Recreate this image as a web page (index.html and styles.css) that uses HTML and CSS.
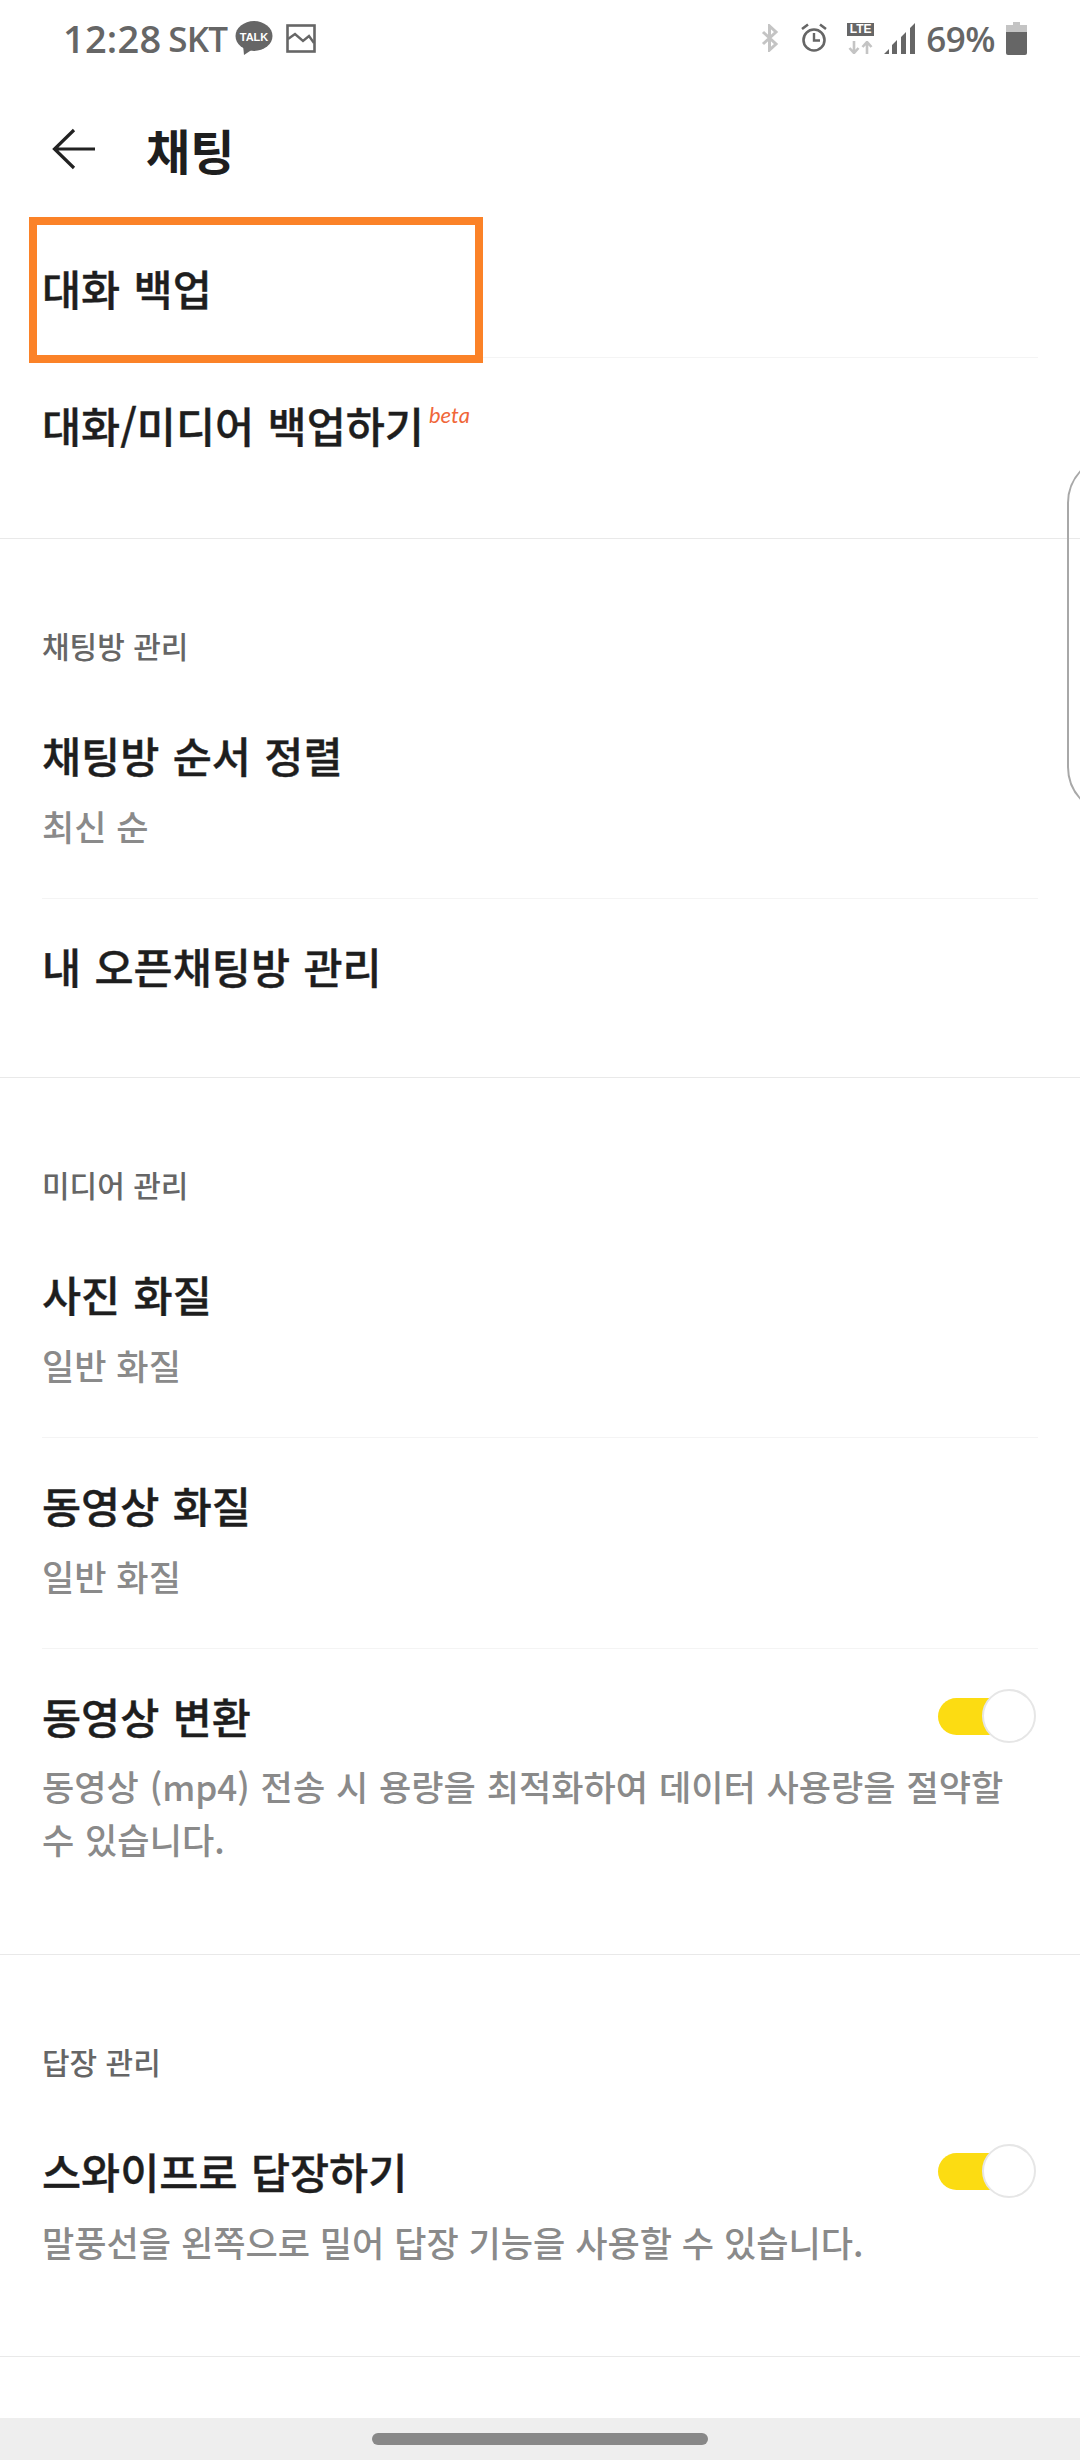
FILE: index.html
```html
<!DOCTYPE html>
<html lang="ko">
<head>
    <meta charset="UTF-8">
    <meta name="viewport" content="width=device-width, initial-scale=1.0">
    <title>채팅</title>
    <link rel="stylesheet" href="styles.css">
</head>
<body>
    <div class="phone">
        <div class="status-bar">
            <div class="status-left">
                <span class="status-time">12:28</span>
                <span class="status-carrier">SKT</span>
                <svg class="ic-talk" width="38" height="35" viewBox="0 0 38 35">
                    <ellipse cx="19" cy="15" rx="18.5" ry="15" fill="#666"/>
                    <path d="M8 24 L9 34 L18 28 Z" fill="#666"/>
                    <text x="19" y="19.5" text-anchor="middle" class="talk-text">TALK</text>
                </svg>
                <svg class="ic-image" width="30" height="29" viewBox="0 0 30 29">
                    <rect x="1.5" y="1.5" width="27" height="26" fill="none" stroke="#666" stroke-width="2.6"/>
                    <path d="M2 15 L9 10 L17 17 L23 12 L28 19" fill="none" stroke="#666" stroke-width="2.4"/>
                </svg>
            </div>
            <div class="status-right">
                <svg width="18" height="28" viewBox="0 0 18 28">
                    <path d="M2 8 L15 20 L8.5 26 V2 L15 8 L2 20" fill="none" stroke="#c4c4c4" stroke-width="3"/>
                </svg>
                <svg class="ic-alarm" width="26" height="30" viewBox="0 0 26 30">
                    <circle cx="13" cy="17" r="10.5" fill="none" stroke="#666" stroke-width="2.6"/>
                    <path d="M13 10 V17.5 H19" fill="none" stroke="#666" stroke-width="2.4"/>
                    <path d="M1 6 L7 1.5 M25 6 L19 1.5" stroke="#666" stroke-width="2.6"/>
                </svg>
                <div class="ic-lte">
                    <span class="lte-box">LTE</span>
                    <svg width="27" height="13" viewBox="0 0 27 13">
                        <path d="M7 0 V11 M2.5 7 L7 12 L11.5 7" fill="none" stroke="#c4c4c4" stroke-width="2.6"/>
                        <path d="M20 13 V2 M15.5 6 L20 1 L24.5 6" fill="none" stroke="#c4c4c4" stroke-width="2.6"/>
                    </svg>
                </div>
                <svg class="ic-signal" width="32" height="31" viewBox="0 0 32 31">
                    <path d="M0 31 L5 26 V31 Z M8 31 V22 L13 17 V31 Z M17 31 V14 L22 9 V31 Z M26 31 V5 L31 0 V31 Z" fill="#666"/>
                </svg>
                <span class="status-battery">69%</span>
                <svg class="ic-battery" width="21" height="33" viewBox="0 0 21 33">
                    <path d="M7 0 H14 V3 H21 V10 H0 V3 H7 Z" fill="#c4c4c4"/>
                    <path d="M0 10 H21 V31 Q21 33 19 33 H2 Q0 33 0 31 Z" fill="#666"/>
                </svg>
            </div>
        </div>

        <header class="app-bar">
            <svg class="back" width="44" height="44" viewBox="0 0 44 44">
                <path d="M43 22 H3 M22 3 L2.5 22 L22 41" fill="none" stroke="#222" stroke-width="3.2"/>
            </svg>
            <h1>채팅</h1>
        </header>

        <section class="section section-top">
            <div class="item item-head">
                <div class="item-title">대화 백업</div>
            </div>
            <div class="item">
                <div class="item-title">대화/미디어 백업하기<sup class="beta">beta</sup></div>
            </div>
        </section>

        <section class="section">
            <div class="section-label">채팅방 관리</div>
            <div class="item">
                <div class="item-title">채팅방 순서 정렬</div>
                <div class="item-sub">최신 순</div>
            </div>
            <div class="item">
                <div class="item-title">내 오픈채팅방 관리</div>
            </div>
        </section>

        <section class="section">
            <div class="section-label">미디어 관리</div>
            <div class="item">
                <div class="item-title">사진 화질</div>
                <div class="item-sub">일반 화질</div>
            </div>
            <div class="item">
                <div class="item-title">동영상 화질</div>
                <div class="item-sub">일반 화질</div>
            </div>
            <div class="item">
                <div class="item-row">
                    <div class="item-title">동영상 변환</div>
                    <div class="toggle"><span class="knob"></span></div>
                </div>
                <div class="item-sub item-desc">동영상 (mp4) 전송 시 용량을 최적화하여 데이터 사용량을 절약할 수 있습니다.</div>
            </div>
        </section>

        <section class="section section-last">
            <div class="section-label">답장 관리</div>
            <div class="item">
                <div class="item-row">
                    <div class="item-title">스와이프로 답장하기</div>
                    <div class="toggle"><span class="knob"></span></div>
                </div>
                <div class="item-sub">말풍선을 왼쪽으로 밀어 답장 기능을 사용할 수 있습니다.</div>
            </div>
        </section>

        <div class="spacer"></div>

        <div class="nav-bar"><span class="nav-pill"></span></div>

        <div class="highlight"></div>
        <div class="edge-handle"></div>
    </div>
</body>
</html>
```

FILE: styles.css
```css
* {
    box-sizing: border-box;
}

html, body {
    margin: 0;
    padding: 0;
}

body {
    font-family: "Noto Sans CJK KR", "Noto Sans", sans-serif;
    background-color: #ffffff;
    color: #1e1e1e;
}

.phone {
    position: relative;
    width: 1080px;
    height: 2460px;
    display: flex;
    flex-direction: column;
    overflow: hidden;
}

/* status bar */
.status-bar {
    height: 76px;
    flex: none;
    display: flex;
    justify-content: space-between;
    align-items: center;
    padding: 0 53px 0 63px;
    color: #666;
    font-family: "Open Sans", sans-serif;
    font-weight: 600;
}

.status-left,
.status-right {
    display: flex;
    align-items: center;
}

.status-time {
    font-size: 38px;
    letter-spacing: 0.2px;
}

.status-carrier {
    font-size: 35px;
    letter-spacing: -0.8px;
    margin-left: 7px;
}

.ic-talk {
    margin-left: 8px;
}

.ic-image {
    margin-left: 13px;
}

.talk-text {
    font-family: "Liberation Sans", sans-serif;
    font-size: 11px;
    font-weight: bold;
    fill: #fff;
}

.ic-alarm {
    margin-left: 22px;
}

.ic-lte {
    margin-left: 20px;
    width: 27px;
    display: flex;
    flex-direction: column;
    gap: 5px;
}

.lte-box {
    height: 13px;
    background: #666;
    color: #fff;
    font-family: "Liberation Sans", sans-serif;
    font-size: 12px;
    font-weight: bold;
    line-height: 13px;
    text-align: center;
}

.ic-signal {
    margin-left: 10px;
}

.status-battery {
    font-size: 35px;
    letter-spacing: -0.5px;
    margin-left: 10px;
}

.ic-battery {
    margin-left: 11px;
}

/* app bar */
.app-bar {
    height: 146px;
    flex: none;
    display: flex;
    align-items: center;
    padding-left: 52px;
}

.app-bar h1 {
    margin: 0 0 0 50px;
    font-size: 48px;
    font-weight: 700;
    line-height: 60px;
}

/* list */
.section {
    border-bottom: 1px solid #e9e9e9;
    padding: 84px 42px 38px;
}

.section-top {
    padding-top: 0;
    padding-bottom: 40px;
}

.section-last {
    padding-bottom: 42px;
}

.section-label {
    font-size: 30px;
    font-weight: 500;
    line-height: 44px;
    color: #666;
    margin-bottom: 21px;
}

.item {
    padding: 40px 0 46px;
    border-bottom: 1px solid #f4f4f4;
}

.item:last-child {
    border-bottom: none;
}

.item-head {
    height: 136px;
    padding: 0 0 4px;
    display: flex;
    align-items: center;
}

.item-title {
    font-size: 42.5px;
    font-weight: 500;
    line-height: 54px;
    word-spacing: 1.5px;
    -webkit-text-stroke: 0.4px #1e1e1e;
}

.item-sub {
    font-size: 35.1px;
    font-weight: 500;
    line-height: 53px;
    color: #8a8a8a;
    margin-top: 17px;
}

.item-desc {
    margin-top: 16px;
    margin-bottom: 5px;
    padding-right: 20px;
    word-spacing: 1px;
}

.item-row {
    display: flex;
    justify-content: space-between;
    align-items: center;
}

.beta {
    color: #f0673a;
    font-family: "Lato", sans-serif;
    font-size: 22px;
    font-style: italic;
    font-weight: 400;
    line-height: 0;
    margin-left: 5px;
    vertical-align: 20px;
    -webkit-text-stroke: 0;
}

/* toggle */
.toggle {
    position: relative;
    width: 82px;
    height: 37px;
    margin-right: 18px;
    background: #fcdc12;
    border-radius: 19px;
}

.knob {
    position: absolute;
    top: -9px;
    right: -16px;
    width: 54px;
    height: 54px;
    background: #fff;
    border: 2px solid #e6e6e6;
    border-radius: 50%;
}

.spacer {
    flex: 1;
}

.nav-bar {
    height: 42px;
    flex: none;
    background: #eeeeee;
    display: flex;
    justify-content: center;
    align-items: center;
}

.nav-pill {
    width: 336px;
    height: 12px;
    background: #888;
    border-radius: 6px;
}

/* overlays */
.highlight {
    position: absolute;
    left: 29px;
    top: 217px;
    width: 454px;
    height: 146px;
    border: 8px solid #fb8228;
}

.edge-handle {
    position: absolute;
    left: 1067px;
    top: 455px;
    width: 100px;
    height: 360px;
    border: 2.5px solid #a8a8a8;
    border-radius: 48px;
}
```
